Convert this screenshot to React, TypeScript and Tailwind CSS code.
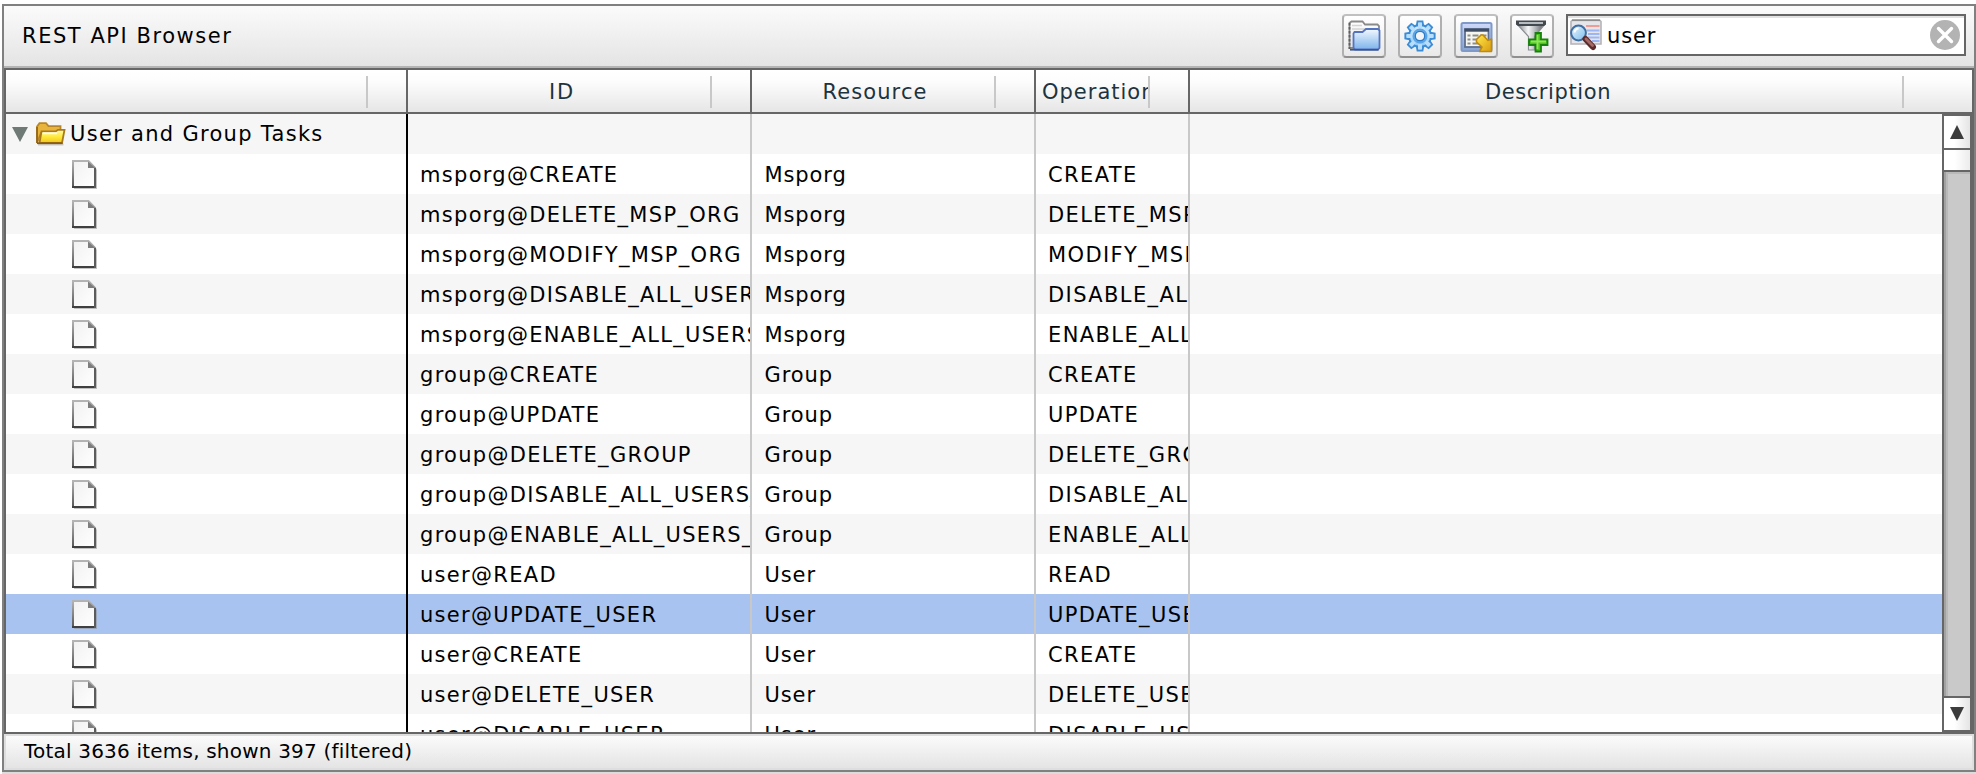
import React from "react";

const rows: [string, string, string][] = [
  ["msporg@CREATE", "Msporg", "CREATE"],
  ["msporg@DELETE_MSP_ORG", "Msporg", "DELETE_MSP_ORG"],
  ["msporg@MODIFY_MSP_ORG", "Msporg", "MODIFY_MSP_ORG"],
  ["msporg@DISABLE_ALL_USERS", "Msporg", "DISABLE_ALL_USERS"],
  ["msporg@ENABLE_ALL_USERS", "Msporg", "ENABLE_ALL_USERS"],
  ["group@CREATE", "Group", "CREATE"],
  ["group@UPDATE", "Group", "UPDATE"],
  ["group@DELETE_GROUP", "Group", "DELETE_GROUP"],
  ["group@DISABLE_ALL_USERS_", "Group", "DISABLE_ALL_USERS"],
  ["group@ENABLE_ALL_USERS_", "Group", "ENABLE_ALL_USERS"],
  ["user@READ", "User", "READ"],
  ["user@UPDATE_USER", "User", "UPDATE_USER"],
  ["user@CREATE", "User", "CREATE"],
  ["user@DELETE_USER", "User", "DELETE_USER"],
  ["user@DISABLE_USER", "User", "DISABLE_USER"],
];

const SELECTED = "user@UPDATE_USER";

function Defs() {
  return (
    <svg width="0" height="0" className="absolute">
      <defs>
        <linearGradient id="blueFolder" x1="0" y1="0" x2="0" y2="1">
          <stop offset="0" stopColor="#f2f8ff" />
          <stop offset="1" stopColor="#7db4ea" />
        </linearGradient>
        <linearGradient id="greyFolder" x1="0" y1="0" x2="0" y2="1">
          <stop offset="0" stopColor="#ffffff" />
          <stop offset="1" stopColor="#e2e2e2" />
        </linearGradient>
        <linearGradient id="gear" x1="0" y1="0" x2="0" y2="1">
          <stop offset="0" stopColor="#d6edff" />
          <stop offset="1" stopColor="#8cc8fa" />
        </linearGradient>
        <linearGradient id="win" x1="0" y1="0" x2="0" y2="1">
          <stop offset="0" stopColor="#d0dafa" />
          <stop offset="1" stopColor="#86a3d0" />
        </linearGradient>
        <linearGradient id="arrow" x1="0" y1="0" x2="1" y2="1">
          <stop offset="0" stopColor="#ffe94a" />
          <stop offset="1" stopColor="#d99a10" />
        </linearGradient>
        <linearGradient id="funnel" x1="0" y1="0" x2="1" y2="0">
          <stop offset="0" stopColor="#777b80" />
          <stop offset="0.4" stopColor="#f6f6f6" />
          <stop offset="0.65" stopColor="#b5b8bc" />
          <stop offset="1" stopColor="#50555b" />
        </linearGradient>
        <linearGradient id="gold" x1="0" y1="0" x2="0" y2="1">
          <stop offset="0" stopColor="#fffbb5" />
          <stop offset="0.5" stopColor="#ffea3d" />
          <stop offset="1" stopColor="#f1c51c" />
        </linearGradient>
        <linearGradient id="page" x1="0" y1="0" x2="1" y2="1">
          <stop offset="0" stopColor="#f1f1f1" />
          <stop offset="1" stopColor="#ffffff" />
        </linearGradient>
        <linearGradient id="pageEdge" x1="0" y1="0" x2="0" y2="1">
          <stop offset="0" stopColor="#b4b4b4" />
          <stop offset="1" stopColor="#565656" />
        </linearGradient>
        <linearGradient id="lens" x1="0" y1="0" x2="1" y2="1">
          <stop offset="0" stopColor="#eaf7ff" />
          <stop offset="1" stopColor="#7cbcec" />
        </linearGradient>
      </defs>
    </svg>
  );
}

function ToolButton({ children }: { children: React.ReactNode }) {
  return (
    <button className="size-11 shrink-0 rounded-[4px] border-2 border-x-[#b0b0b0] border-t-[#c0c0c0] border-b-[#8f8f8f] bg-linear-to-b from-white to-[#e9e9e9]">
      <svg viewBox="2 2 40 40" width="40" height="40">
        {children}
      </svg>
    </button>
  );
}

function FolderButton() {
  return (
    <ToolButton>
      <path d="M7.500 34V9L9.500 7.500H20.500L23 10.500H35.500L37 12V34z" fill="url(#greyFolder)" stroke="#8a8a8a" strokeWidth="1.800" />
      <path d="M7.500 9V35" stroke="#5e5e5e" strokeWidth="1.800" strokeDasharray="2.500 1.500" />
      <path d="M10 11.500H20M10 15H33" stroke="#d4d4d4" strokeWidth="1.500" />
      <path d="M11.500 19.500L12.500 18H20.500L24 15H36L37.500 16.500V34L36 35.500H13L11.500 34z" fill="url(#blueFolder)" stroke="#5574c0" strokeWidth="1.800" />
      <path d="M8 35.800H36.500" stroke="#39558f" strokeWidth="1.600" />
    </ToolButton>
  );
}

const TEETH = [0, 45, 90, 135, 180, 225, 270, 315];

function GearButton() {
  return (
    <ToolButton>
      {TEETH.map((a) => (
        <path key={a} d="M18.500 13L19.500 7.300h5L25.500 13z" transform={`rotate(${a} 22 22)`} fill="#a9d6fb" stroke="#3b8cd6" strokeWidth="1.800" />
      ))}
      <circle cx="22" cy="22" r="11" fill="url(#gear)" stroke="#3b8cd6" strokeWidth="1.800" />
      {TEETH.map((a) => (
        <rect key={a} x="20" y="9" width="4" height="5" transform={`rotate(${a} 22 22)`} fill="#b9defc" />
      ))}
      <circle cx="22" cy="22" r="6.500" fill="none" stroke="#5aa5e6" strokeWidth="2" />
      <circle cx="22" cy="22" r="4.800" fill="#f2f4f6" stroke="#2f7bc8" strokeWidth="1.500" />
    </ToolButton>
  );
}

function WindowButton() {
  return (
    <ToolButton>
      <rect x="7.500" y="9" width="30" height="28" rx="1.500" fill="url(#win)" stroke="#7f99c8" strokeWidth="2" />
      <rect x="11" y="15" width="23.500" height="18" fill="#f6f6f0" stroke="#5d6f90" strokeWidth="1.800" />
      <path d="M10.500 16.200H35" stroke="#3f4c62" strokeWidth="3" />
      <path d="M13.500 21.500h3m2 0h6m2 0h6M13.500 25.500h3m2 0h5M13.500 29.500h3m2 0h7" stroke="#8d8d8d" strokeWidth="1.800" />
      <path d="M22.500 25.500L27 21H29L34 26.500L37.500 25V37.500H25.500L28 33L22.500 28z" fill="url(#arrow)" stroke="#c08a10" strokeWidth="1.600" strokeLinejoin="round" />
    </ToolButton>
  );
}

function FilterButton() {
  return (
    <ToolButton>
      <path d="M7 10H35L24.500 22.500V36H18.500V22.500z" fill="url(#funnel)" stroke="#8a8e93" strokeWidth="1.200" />
      <path d="M6 6.500H36V10.500L34 12H8L6 10.500z" fill="#42494f" />
      <path d="M9 9H33" stroke="#c6cacd" strokeWidth="1.800" />
      <path d="M25.500 19H31V25.500H37.500V31H31V37.500H25.500V31H19V25.500H25.500z" fill="#4cc41b" stroke="#17810f" strokeWidth="1.800" />
      <path d="M27.500 21V35M21 27.500H36" stroke="#8fe45a" strokeWidth="1.800" />
    </ToolButton>
  );
}

function SearchIcon() {
  return (
    <svg viewBox="0 0 32 32" width="32" height="32" className="shrink-0">
      <path d="M1 25V2.500L2.500 1H29.500L31 2.500V25z" fill="#e6e6ea" stroke="#b4b4b8" strokeWidth="1.600" />
      <path d="M2 1.300H30" stroke="#8d8d8d" strokeWidth="1.600" />
      <path d="M16 7H29.500" stroke="#f0948e" strokeWidth="1.800" />
      <path d="M17 11.500H29.500M18 15H29.500M18 18.500H29.500M22 22H29.500" stroke="#9bb5f5" strokeWidth="2" />
      <circle cx="8.500" cy="14" r="7.400" fill="url(#lens)" stroke="#3f6ea3" strokeWidth="2" />
      <path d="M4.500 13.500a4.500 4.500 0 0 1 4-4" stroke="#fff" strokeWidth="2" fill="none" />
      <path d="M15.500 20L23 28" stroke="#5b2a2a" strokeWidth="6" strokeLinecap="round" />
      <path d="M16 20L22.500 26.500" stroke="#a36a68" strokeWidth="2.800" strokeLinecap="round" />
    </svg>
  );
}

function OpenFolder() {
  return (
    <svg viewBox="0 0 30 24" width="30" height="24" className="ml-2 shrink-0">
      <path d="M2 22.500h25.500" stroke="#c9c9c9" strokeWidth="2" />
      <path d="M1 21V4.500L3.500 1.200h6.500l2.500 3H24.500V11H5z" fill="#e8b43c" stroke="#b8862a" strokeWidth="1.800" />
      <path d="M1 5V21" stroke="#8f641a" strokeWidth="1.600" />
      <path d="M3.500 21L5.500 9.500H19.500L22 7.800H28.500L26 21z" fill="url(#gold)" stroke="#a97a1c" strokeWidth="1.800" />
      <path d="M6.500 11.200H21" stroke="#fffde0" strokeWidth="2" />
      <path d="M1 21.200h25.500" stroke="#8a5c12" strokeWidth="1.800" />
    </svg>
  );
}

function PageIcon() {
  return (
    <svg viewBox="0 0 26 30" width="26" height="30">
      <path d="M2 29h23V10l-1.500-3V27H2z" fill="#8a8a8a" fillOpacity="0.5" />
      <path d="M1 1H16.500L23 8V27H1z" fill="url(#page)" stroke="url(#pageEdge)" strokeWidth="2" />
      <path d="M0 27h24" stroke="#404040" strokeWidth="2" />
      <path d="M23 8V28" stroke="#5c5c5c" strokeWidth="2" />
      <path d="M16 1.500V8h7z" fill="#7d7d7d" />
    </svg>
  );
}

function HeaderCell({ label, width, tick, edge, align }: { label: string; width: string; tick: string; edge: boolean; align: string }) {
  return (
    <div className={`flex h-[42px] shrink-0 ${width} ${edge ? "border-r-2 border-[#666]" : ""}`}>
      <div className={`mt-[6px] flex h-8 shrink-0 overflow-hidden border-r-2 border-[#c8c8c8] whitespace-nowrap text-[#1d3340] ${tick} ${align}`}>
        <span className="leading-[33px]">{label}</span>
      </div>
    </div>
  );
}

function Row({ index, first, cells, selected }: { index: number; first: React.ReactNode; cells: string[]; selected: boolean }) {
  const bg = selected ? "bg-[#a8c3ef]" : index % 2 === 0 ? "bg-[#f6f6f6]" : "bg-white";
  return (
    <div className={`flex h-10 shrink-0 whitespace-nowrap leading-[42px] text-black ${bg}`}>
      <div className="flex w-[402px] shrink-0 border-r-2 border-black">{first}</div>
      <div className="w-[344px] shrink-0 overflow-hidden border-r-2 border-[#c8c8c8] pl-3 tracking-[1.3px]">{cells[0]}</div>
      <div className="w-[284px] shrink-0 overflow-hidden border-r-2 border-[#c8c8c8] pl-[12.500px] tracking-[0.9px]">{cells[1]}</div>
      <div className="w-[154px] shrink-0 overflow-hidden border-r-2 border-[#c8c8c8] pl-3 tracking-[1.4px]">{cells[2]}</div>
      <div className="grow" />
    </div>
  );
}

export default function App() {
  return (
    <div className="h-[774px] w-[1976px] overflow-hidden bg-white pt-1 pl-0.5 font-['DejaVu_Sans',sans-serif] text-[21px]">
      <Defs />
      <div className="flex h-[768px] flex-col border-2 border-[#808080]">
        <div className="flex h-[60px] shrink-0 items-start bg-linear-to-b from-[#fbfbfb] to-[#e4e4e4] pt-2 pr-2 pl-[18px]">
          <h1 className="grow leading-[44px] tracking-[1.55px] text-black">REST API Browser</h1>
          <div className="flex gap-3">
            <FolderButton />
            <GearButton />
            <WindowButton />
            <FilterButton />
          </div>
          <div className="ml-3 flex h-[42px] w-[400px] items-center border-2 border-[#666] bg-white pr-[4px] pl-0.5 shadow-[inset_0_2px_0_#e2e2e2]">
            <SearchIcon />
            <span className="grow pt-0.5 pl-[5px] leading-[38px] tracking-[0.9px] text-black">user</span>
            <svg viewBox="0 0 30 30" width="30" height="30">
              <circle cx="15" cy="15" r="15" fill="#b3b3b3" />
              <path d="M8.500 8.500l13 13M21.500 8.500l-13 13" stroke="#fff" strokeWidth="3.400" strokeLinecap="round" />
            </svg>
          </div>
        </div>
        <div className="h-0.5 shrink-0 bg-[#b4b4b4]" />
        <div className="flex h-[666px] shrink-0 flex-col border-2 border-[#666]">
          <div className="flex h-11 shrink-0 border-b-2 border-[#666] bg-linear-to-b from-white via-[#fcfcfc] via-30% to-[#e6e6e6]">
            <HeaderCell label="" width="w-[402px]" tick="w-[362px]" edge align="justify-center" />
            <HeaderCell label="ID" width="w-[344px]" tick="w-[304px] pl-1.5 tracking-[1.8px]" edge align="justify-center" />
            <HeaderCell label="Resource" width="w-[284px]" tick="w-[244px] pl-1 tracking-[1.1px]" edge align="justify-center" />
            <HeaderCell label="Operation" width="w-[154px]" tick="w-[114px] pl-1.5 tracking-[1px]" edge align="justify-start" />
            <HeaderCell label="Description" width="grow" tick="w-[714px] pl-1 tracking-[0.6px]" edge={false} align="justify-center" />
          </div>
          <div className="flex h-[618px] shrink-0">
            <div className="flex grow flex-col overflow-hidden">
              <Row
                index={0}
                selected={false}
                cells={["", "", ""]}
                first={
                  <div className="flex items-center pl-1.5">
                    <svg viewBox="0 0 16 15" width="16" height="15" className="mt-px shrink-0">
                      <path d="M0 0h16L8 15z" fill="#6f7a76" />
                    </svg>
                    <OpenFolder />
                    <span className="pl-1 tracking-[1.3px]">User and Group Tasks</span>
                  </div>
                }
              />
              {rows.map((r, i) => (
                <Row
                  key={r[0]}
                  index={i + 1}
                  selected={r[0] === SELECTED}
                  cells={r}
                  first={
                    <div className="pt-1.5 pl-[66px]">
                      <PageIcon />
                    </div>
                  }
                />
              ))}
            </div>
            <div className="flex w-[30px] shrink-0 flex-col border-2 border-[#666]">
              <div className="flex h-8 shrink-0 items-center justify-center bg-linear-to-r from-white from-40% to-[#e4e4e4]">
                <svg viewBox="0 0 14 14" width="14" height="14">
                  <path d="M7 0l7 14H0z" fill="#3c3c3c" />
                </svg>
              </div>
              <div className="h-[24px] shrink-0 border-y-2 border-[#666] bg-linear-to-r from-white from-40% to-[#ececec]" />
              <div className="grow border-l-2 border-[#a2a2a2] bg-[#c9c9c9] shadow-[inset_2px_2px_0_#b9b9b9]" />
              <div className="flex h-[34px] shrink-0 items-center justify-center border-t-2 border-[#666] bg-linear-to-r from-white from-40% to-[#e4e4e4]">
                <svg viewBox="0 0 14 14" width="14" height="14">
                  <path d="M7 14l7-14H0z" fill="#3c3c3c" />
                </svg>
              </div>
            </div>
          </div>
        </div>
        <div className="grow border-2 border-[#dedede] bg-linear-to-b from-[#fbfbfb] to-[#e4e4e4] pl-[18px]">
          <p className="text-[20px] leading-[31px] tracking-[0.2px] text-black">Total 3636 items, shown 397 (filtered)</p>
        </div>
      </div>
      <div className="h-0.5 bg-[#dcdcdc]" />
    </div>
  );
}
